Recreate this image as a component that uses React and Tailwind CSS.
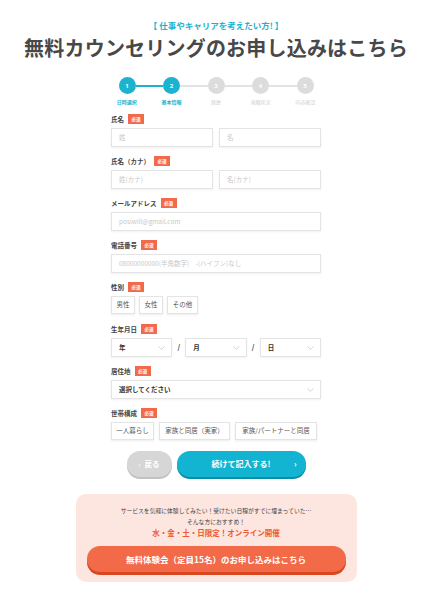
import React from "react";

const JP = { fontFamily: '"Noto Sans CJK JP", "Noto Sans", sans-serif' };

function Badge() {
  return (
    <span className="ml-[4px] inline-flex h-[10px] w-[16px] items-center justify-center bg-[#f26a4b] text-[4.5px] font-bold leading-none text-white">
      必須
    </span>
  );
}

function Label({ children }) {
  return (
    <div className="flex h-[10px] items-center text-[6.5px] font-bold leading-none text-[#444]">
      <span>{children}</span>
      <Badge />
    </div>
  );
}

function Input({ placeholder, className = "" }) {
  return (
    <div
      className={
        "flex h-[19px] items-center border border-[#e4e4e4] bg-white pl-[7px] text-[6.5px] text-[#c8c8c8] shadow-[0_1px_2px_rgba(0,0,0,0.06)] " +
        className
      }
    >
      {placeholder}
    </div>
  );
}

function Chevron() {
  return (
    <svg width="7" height="4" viewBox="0 0 7 4" className="shrink-0">
      <path d="M0.5 0.5 L3.5 3.3 L6.5 0.5" fill="none" stroke="#c4c4c4" strokeWidth="0.7" />
    </svg>
  );
}

function Select({ text, className = "" }) {
  return (
    <div
      className={
        "flex h-[19px] items-center justify-between border border-[#e4e4e4] bg-white pl-[7px] pr-[6px] text-[6.5px] font-bold text-[#333] shadow-[0_1px_2px_rgba(0,0,0,0.06)] " +
        className
      }
    >
      <span>{text}</span>
      <Chevron />
    </div>
  );
}

function Choice({ children, className = "" }) {
  return (
    <div
      className={
        "flex h-[18px] items-center justify-center border border-[#e4e4e4] bg-white text-[6.5px] text-[#555] shadow-[0_1px_2px_rgba(0,0,0,0.08)] " +
        className
      }
    >
      {children}
    </div>
  );
}

function Section({ label, children }) {
  return (
    <div className="flex flex-col gap-[4px]">
      <Label>{label}</Label>
      <div className="h-[19px]">{children}</div>
    </div>
  );
}

const steps = ["日時選択", "基本情報", "経歴", "退職状況", "内容確認"];

function Stepper() {
  return (
    <div className="mx-auto flex w-[222px] flex-col items-center">
      <div className="flex w-[195px] items-center">
        {steps.map((s, i) => (
          <React.Fragment key={s}>
            {i > 0 && (
              <div className={"h-[2px] flex-1 " + (i <= 1 ? "bg-[#1ab4d1]" : "bg-[#e2e2e2]")} />
            )}
            <div
              className={
                "flex h-[17px] w-[17px] shrink-0 items-center justify-center rounded-full text-[6px] font-bold leading-none text-white " +
                (i <= 1 ? "bg-[#1ab4d1]" : "bg-[#dcdcdc]")
              }
              style={{ fontFamily: '"Open Sans", sans-serif' }}
            >
              {i + 1}
            </div>
          </React.Fragment>
        ))}
      </div>
      <div className="mt-[4px] flex w-[223px]">
        {steps.map((s, i) => (
          <div
            key={s}
            className={
              "flex-1 text-center text-[5px] leading-[7px] " +
              (i <= 1 ? "font-bold text-[#1ab4d1]" : "text-[#cfcfcf]")
            }
          >
            {s}
          </div>
        ))}
      </div>
    </div>
  );
}

export default function App() {
  return (
    <div className="min-h-[600px] w-[427px] bg-white pl-[5px] pt-[19px]" style={JP}>
      <div className="text-center text-[8.5px] font-bold leading-[12px] text-[#1ab4d1]">
        【 仕事やキャリアを考えたい方! 】
      </div>
      <h1 className="mt-[4px] text-center text-[20px] font-bold leading-[26px] tracking-[0.2px] text-[#484848]">
        無料カウンセリングのお申し込みはこちら
      </h1>
      <div className="mt-[16px]">
        <Stepper />
      </div>

      <div className="mx-auto mt-[9px] flex w-[210px] flex-col gap-[9px]">
        <Section label="氏名">
          <div className="flex gap-[6px]">
            <Input placeholder="姓" className="flex-1" />
            <Input placeholder="名" className="flex-1" />
          </div>
        </Section>
        <Section label="氏名（カナ）">
          <div className="flex gap-[6px]">
            <Input placeholder="姓(カナ)" className="flex-1" />
            <Input placeholder="名(カナ)" className="flex-1" />
          </div>
        </Section>
        <Section label="メールアドレス">
          <Input placeholder="posiwill@gmail.com" />
        </Section>
        <Section label="電話番号">
          <Input placeholder="08000000000(半角数字)　-(ハイフン)なし" />
        </Section>
        <Section label="性別">
          <div className="flex gap-[4px]">
            <Choice className="w-[24px]">男性</Choice>
            <Choice className="w-[24px]">女性</Choice>
            <Choice className="w-[31px]">その他</Choice>
          </div>
        </Section>
        <Section label="生年月日">
          <div className="flex items-center">
            <Select text="年" className="flex-1" />
            <span className="w-[13px] text-center text-[7px] font-bold text-[#444]">/</span>
            <Select text="月" className="flex-1" />
            <span className="w-[13px] text-center text-[7px] font-bold text-[#444]">/</span>
            <Select text="日" className="flex-1" />
          </div>
        </Section>
        <Section label="居住地">
          <Select text="選択してください" />
        </Section>
        <Section label="世帯構成">
          <div className="flex gap-[5px]">
            <Choice className="w-[43px]">一人暮らし</Choice>
            <Choice className="w-[71px]">家族と同居（実家）</Choice>
            <Choice className="w-[82px]">家族/パートナーと同居</Choice>
          </div>
        </Section>
      </div>

      <div className="mx-auto mt-[10px] flex w-[179px] gap-[5px]">
        <div className="flex h-[26px] w-[45px] items-center justify-center gap-[4px] rounded-full bg-[#d6d6d6] text-[7.5px] font-bold text-white shadow-[0_2px_0_#c2c2c2]">
          <span className="text-[6px]">‹</span>
          <span>戻る</span>
        </div>
        <div className="relative flex h-[26px] flex-1 items-center justify-center rounded-full bg-[#13b4d1] text-[8px] font-bold text-white shadow-[0_2px_0_#0a8ea6]">
          <span>続けて記入する!</span>
          <span className="absolute right-[9px] text-[8px]">›</span>
        </div>
      </div>

      <div className="mx-auto mt-[17px] w-[281px] rounded-[10px] bg-[#fde6df] px-[11px] pb-[10px] pt-[11px] text-center">
        <div className="text-[5.8px] leading-[11px] text-[#444]">
          サービスを気軽に体験してみたい！受けたい日程がすでに埋まっていた…
        </div>
        <div className="text-[5.8px] leading-[11px] text-[#444]">そんな方におすすめ！</div>
        <div className="text-[7.5px] font-bold leading-[11px] text-[#ec5a35]">
          水・金・土・日限定！オンライン開催
        </div>
        <div className="mt-[8px] flex h-[26px] items-center justify-center rounded-full bg-[#f36a48] text-[8.5px] font-bold text-white shadow-[0_3px_0_#d9461f]">
          無料体験会（定員15名）のお申し込みはこちら
        </div>
      </div>
    </div>
  );
}
